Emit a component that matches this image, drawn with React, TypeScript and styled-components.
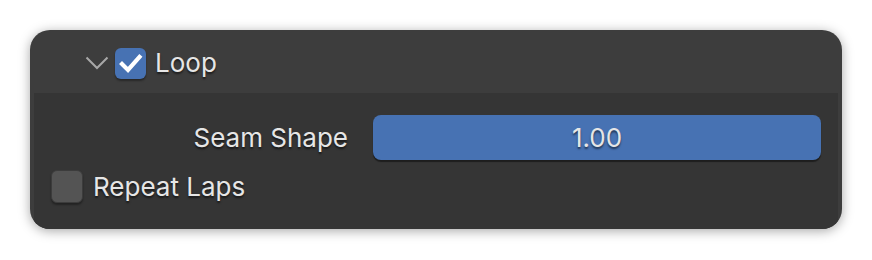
import React from "react";
import styled, { createGlobalStyle } from "styled-components";

const Global = createGlobalStyle`
  html, body { margin: 0; padding: 0; background: #ffffff; }
  body { font-family: Inter, "Noto Sans", "DejaVu Sans", sans-serif; }
`;

const Page = styled.div`
  padding: 30px;
  width: 812px;
`;

const Panel = styled.div`
  width: 812px;
  height: 199px;
  border-radius: 20px;
  background: #3d3d3d;
  box-shadow: 0 2px 12px rgba(0, 0, 0, 0.35);
  overflow: hidden;
  display: flex;
  flex-direction: column;
`;

const Header = styled.div`
  height: 63px;
  display: flex;
  align-items: center;
  padding: 3px 0 0 55px;
  box-sizing: border-box;
`;

const Chevron = styled.svg`
  width: 24px;
  height: 14px;
  margin-right: 6px;
`;

const Check = styled.div<{ $on?: boolean }>`
  width: ${(p) => (p.$on ? 31 : 32)}px;
  height: ${(p) => (p.$on ? 31 : 33)}px;
  border-radius: 6px;
  box-sizing: border-box;
  background: ${(p) => (p.$on ? "#4772b3" : "#545454")};
  border: ${(p) => (p.$on ? "none" : "1px solid #3c3c3c")};
  box-shadow: 0 2px 2px rgba(0, 0, 0, 0.35);
  display: flex;
  align-items: center;
  justify-content: center;
  flex-shrink: 0;
`;

const Text = styled.span<{ $size?: number }>`
  font-size: ${(p) => p.$size ?? 26}px;
  color: #e6e6e6;
  text-shadow: 0 2px 2px rgba(0, 0, 0, 0.55);
  line-height: 1;
`;

const HeaderTitle = styled(Text)`
  margin-left: 9px;
`;

const Body = styled.div`
  flex: 1;
  margin: 0 4px;
  background: #353535;
  padding: 22px 17px 0 17px;
  display: flex;
  flex-direction: column;
  gap: 10px;
`;

const PropRow = styled.div`
  display: grid;
  grid-template-columns: 297px 1fr;
  column-gap: 25px;
  align-items: center;
`;

const Label = styled(Text)`
  text-align: right;
`;

const NumberField = styled.div`
  height: 45px;
  border-radius: 8px;
  background: #4772b3;
  box-shadow: 0 2px 1px rgba(0, 0, 0, 0.45);
  display: flex;
  align-items: center;
  justify-content: center;
`;

const CheckRow = styled.div`
  display: flex;
  align-items: center;
  gap: 10px;
`;

export default function App() {
  return (
    <>
      <Global />
      <Page>
        <Panel>
          <Header>
            <Chevron viewBox="0 0 24 14">
              <polyline points="1.5,1.5 12,12 22.5,1.5" fill="none" stroke="#a8a8a8" strokeWidth="2" />
            </Chevron>
            <Check $on>
              <svg width="31" height="31" viewBox="0 0 31 31">
                <polyline
                  points="7,16 13,22 24.5,9"
                  fill="none"
                  stroke="#ffffff"
                  strokeWidth="4.2"
                  strokeLinecap="square"
                  strokeLinejoin="miter"
                />
              </svg>
            </Check>
            <HeaderTitle>Loop</HeaderTitle>
          </Header>
          <Body>
            <PropRow>
              <Label>Seam Shape</Label>
              <NumberField>
                <Text>1.00</Text>
              </NumberField>
            </PropRow>
            <CheckRow>
              <Check />
              <Text>Repeat Laps</Text>
            </CheckRow>
          </Body>
        </Panel>
      </Page>
    </>
  );
}
